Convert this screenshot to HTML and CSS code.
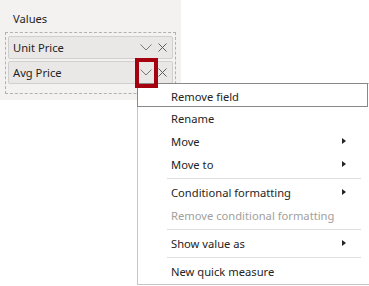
FILE: index.html
```html
<!DOCTYPE html>
<html lang="en">
<head>
    <meta charset="UTF-8">
    <title>Values field menu</title>
    <link rel="stylesheet" href="styles.css">
</head>
<body>
    <div class="pane">
        <div class="pane-title">Values</div>
        <div class="well">
            <div class="pill">
                <span class="pill-name">Unit Price</span>
                <svg class="chev" width="12" height="7" viewBox="0 0 12 7"><path d="M0.5 0.5 L6 6 L11.5 0.5" fill="none" stroke="#7a7876" stroke-width="1"/></svg>
                <svg class="close" width="9" height="9" viewBox="0 0 9 9"><path d="M0.5 0.5 L8.5 8.5 M8.5 0.5 L0.5 8.5" fill="none" stroke="#605e5c" stroke-width="1"/></svg>
            </div>
            <div class="pill">
                <span class="pill-name">Avg Price</span>
                <svg class="chev" width="12" height="7" viewBox="0 0 12 7"><path d="M0.5 0.5 L6 6 L11.5 0.5" fill="none" stroke="#7a7876" stroke-width="1"/></svg>
                <svg class="close" width="9" height="9" viewBox="0 0 9 9"><path d="M0.5 0.5 L8.5 8.5 M8.5 0.5 L0.5 8.5" fill="none" stroke="#605e5c" stroke-width="1"/></svg>
            </div>
        </div>
    </div>

    <ul class="menu">
        <li class="item focused">Remove field</li>
        <li class="item">Rename</li>
        <li class="item sub">Move</li>
        <li class="item sub">Move to</li>
        <li class="sep"></li>
        <li class="item sub">Conditional formatting</li>
        <li class="item disabled">Remove conditional formatting</li>
        <li class="sep"></li>
        <li class="item sub">Show value as</li>
        <li class="sep"></li>
        <li class="item">New quick measure</li>
    </ul>

    <div class="callout"></div>
</body>
</html>
```

FILE: styles.css
```css
body {
    margin: 0;
    background: #ffffff;
    font-family: 'Segoe UI', 'Noto Sans', sans-serif;
    font-size: 11.2px;
    color: #252423;
}
.pane {
    width: 181px;
    height: 100px;
    box-sizing: border-box;
    background: #f3f2f1;
    padding-top: 11px;
}
.pane-title {
    line-height: 16px;
    padding-left: 13px;
}
.well {
    margin: 5px 0 0 5px;
    width: 171px;
    box-sizing: border-box;
    border: 1px dashed #b3b0ad;
    padding: 3px 2px 9px 2px;
}
.pill {
    display: flex;
    align-items: center;
    height: 23px;
    box-sizing: border-box;
    border: 1px solid #d2d0ce;
    border-radius: 2px;
    background: #e9e8e7;
    padding-left: 4px;
}
.pill + .pill {
    margin-top: 2px;
}
.pill-name {
    flex: 1;
}
.chev {
    margin-right: 6px;
}
.close {
    margin-right: 5px;
}
.menu {
    position: absolute;
    left: 137px;
    top: 83px;
    width: 232px;
    box-sizing: border-box;
    margin: 0;
    padding: 0 0 1px 0;
    list-style: none;
    background: #ffffff;
    border: 1px solid #c8c6c4;
    border-right: none;
}
.item {
    position: relative;
    height: 23px;
    line-height: 23px;
    padding-left: 33px;
    white-space: nowrap;
}
.item.focused {
    margin: -1px 1px 0 -1px;
    height: 24px;
    line-height: 25px;
    border: 1px solid #8a8886;
    box-sizing: border-box;
}
.item.disabled {
    color: #a19f9d;
}
.sub::after {
    content: "";
    position: absolute;
    left: 204px;
    top: 8px;
    border-left: 4px solid #252423;
    border-top: 3.5px solid transparent;
    border-bottom: 3.5px solid transparent;
}
.sep {
    height: 1px;
    background: #e1dfdd;
    margin: 2px 8px 2px 29px;
}
.callout {
    position: absolute;
    left: 135px;
    top: 58px;
    width: 23px;
    height: 30px;
    box-sizing: border-box;
    border: 4px solid #a4000f;
}
```
